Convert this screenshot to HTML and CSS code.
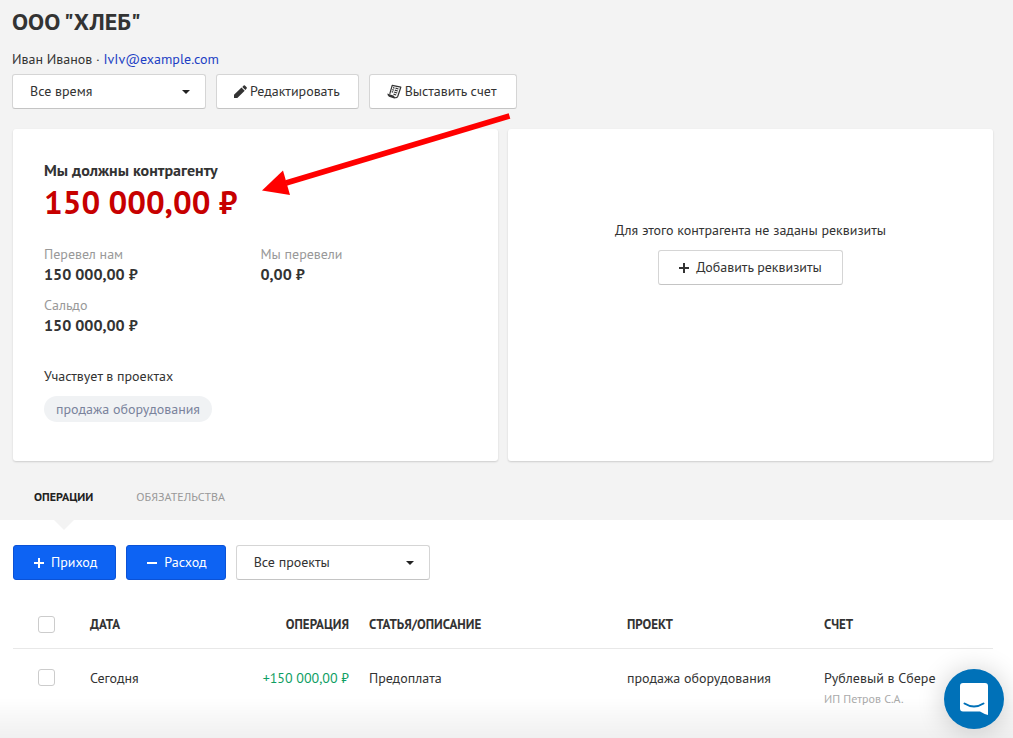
FILE: index.html
```html
<!DOCTYPE html>
<html lang="ru">
<head>
<meta charset="utf-8">
<meta name="viewport" content="width=device-width, initial-scale=1">
<title>ООО "ХЛЕБ"</title>
<link rel="stylesheet" href="styles.css">
</head>
<body>
<header class="summary">
  <h1 class="title">ООО "ХЛЕБ"</h1>
  <p class="contact">Иван Иванов · <a class="mail" href="mailto:IvIv@example.com">IvIv@example.com</a></p>
  <div class="toolbar">
    <div class="select-wrap">
      <select class="select" aria-label="Период"><option>Все время</option></select>
      <svg class="caret" viewBox="0 0 8 4" aria-hidden="true"><path d="M0 0h8L4 4z"/></svg>
    </div>
    <button class="btn" type="button">
      <svg class="icon icon-pencil" viewBox="0 0 13 13" aria-hidden="true"><path d="M0 13V9.800L7.500 2.600l3.200 3.200L3.300 13zM8.300 1.900L9.700.6q.6-.5 1.200 0l1.700 1.700q.6.600 0 1.200L11.400 4.900z"/></svg>
      Редактировать
    </button>
    <button class="btn btn-bill" type="button">
      <svg class="icon icon-bill" viewBox="0 0 15 15" aria-hidden="true"><path d="M2.800 9.800L5.200 1.400l8.600 1.800-3 9.100q-.7 1.800-2.500 1.200" fill="none" stroke="currentColor" stroke-width="1.200" stroke-linejoin="round"/><path d="M0.400 9.600l6.600 2.100q.2 1.700 2 2-.9 1.200-2.400.6L2 12.700Q.2 11.600.4 9.600z"/><path d="M6 3.700l1.500.4M8.500 4.200l3 .8M5.300 5.700l1.500.4M7.800 6.200l3 .8M4.700 7.700l1.500.4M7.200 8.200l3 .8M6.500 10.200l2.700.8" fill="none" stroke="currentColor" stroke-width="1.200"/></svg>
      Выставить счет
    </button>
  </div>
  <svg class="pointer" viewBox="0 0 250 84" aria-hidden="true"><path d="M247.500 4L24 71" stroke="#f00" stroke-width="5.500"/><path d="M0 78.500L21 58.500 28 83z" fill="#f00"/></svg>

  <div class="cards">
    <section class="card balance">
      <h2 class="debt-label">Мы должны контрагенту</h2>
      <p class="debt">150 000,00 ₽</p>
      <dl class="figures">
        <div><dt>Перевел нам</dt><dd>150 000,00 ₽</dd></div>
        <div><dt>Мы перевели</dt><dd>0,00 ₽</dd></div>
        <div><dt>Сальдо</dt><dd>150 000,00 ₽</dd></div>
      </dl>
      <p class="projects-label">Участвует в проектах</p>
      <span class="tag">продажа оборудования</span>
    </section>
    <section class="card requisites">
      <p>Для этого контрагента не заданы реквизиты</p>
      <button class="btn btn-add" type="button">
        <svg class="icon icon-sign" viewBox="0 0 10 10" aria-hidden="true"><path d="M4 0h2v4h4v2H6v4H4V6H0V4h4z"/></svg>
        Добавить реквизиты
      </button>
    </section>
  </div>

  <nav class="tabs">
    <a class="tab tab-active" href="#operations">ОПЕРАЦИИ</a>
    <a class="tab" href="#obligations">ОБЯЗАТЕЛЬСТВА</a>
  </nav>
</header>

<main class="operations" id="operations">
  <div class="toolbar">
    <button class="btn btn-primary" type="button">
      <svg class="icon icon-sign" viewBox="0 0 10 10" aria-hidden="true"><path d="M4 0h2v4h4v2H6v4H4V6H0V4h4z"/></svg>
      Приход
    </button>
    <button class="btn btn-primary" type="button">
      <svg class="icon icon-sign" viewBox="0 0 10 10" aria-hidden="true"><path d="M0 4h10v2H0z"/></svg>
      Расход
    </button>
    <div class="select-wrap">
      <select class="select" aria-label="Проект"><option>Все проекты</option></select>
      <svg class="caret" viewBox="0 0 8 4" aria-hidden="true"><path d="M0 0h8L4 4z"/></svg>
    </div>
  </div>
  <table class="table">
    <colgroup><col class="col-check"><col class="col-date"><col class="col-sum"><col class="col-article"><col class="col-project"><col class="col-account"></colgroup>
    <thead>
      <tr>
        <th class="check"><input class="box" type="checkbox" aria-label="Выбрать все"></th>
        <th>ДАТА</th><th class="sum">ОПЕРАЦИЯ</th><th>СТАТЬЯ/ОПИСАНИЕ</th><th>ПРОЕКТ</th><th>СЧЕТ</th>
      </tr>
    </thead>
    <tbody>
      <tr>
        <td class="check"><input class="box" type="checkbox" aria-label="Выбрать операцию"></td>
        <td>Сегодня</td><td class="sum income">+150 000,00 ₽</td><td>Предоплата</td><td>продажа оборудования</td>
        <td>Рублевый в Сбере<small class="owner">ИП Петров С.А.</small></td>
      </tr>
    </tbody>
  </table>
</main>

<div class="fade"></div>
<button class="chat" type="button" aria-label="Открыть чат">
  <svg class="chat-icon" viewBox="0 0 28 32" aria-hidden="true"><path d="M3 0h22q3 0 3 3v29q-4-1-8-3.500H3q-3 0-3-3V3q0-3 3-3z" fill="#fff"/><path d="M4.500 20.500q9.500 6 19 0" fill="none" stroke="#0071b8" stroke-width="2" stroke-linecap="round"/></svg>
</button>
</body>
</html>
```
FILE: styles.css
```css
* { box-sizing: border-box; }

body {
  margin: 0;
  min-height: 100vh;
  background: #fff;
  color: #333;
  font: 14px/20px "PT Sans", "Noto Sans", sans-serif;
}

h1, h2, p, dl, dd { margin: 0; }

.summary {
  position: relative;
  padding: 8px 20px 0 12px;
  background: #f3f3f3;
}

.title { font-size: 24px; line-height: 28px; }
.contact { margin-top: 13px; }
.mail { color: #1d3fc4; text-decoration: none; }

.toolbar { display: flex; gap: 10px; }
.summary .toolbar { margin-top: 5px; }

.btn,
.select {
  height: 35px;
  border: 1px solid #d5d5d5;
  border-bottom-color: #c4c4c4;
  border-radius: 3px;
  background: #fff;
  color: #333;
  font: inherit;
}

.btn {
  display: inline-flex;
  align-items: center;
  gap: 3px;
  padding: 0 18px 2px 17px;
  white-space: nowrap;
}

.btn-bill { padding-right: 20px; }
.btn-add { gap: 7px; padding: 0 20px 2px; }

.btn-primary {
  gap: 7px;
  padding: 0 18px 2px 20px;
  border-color: #0b52d6;
  background: #0d63f3;
  color: #fff;
}

.icon { flex: none; margin-top: 2px; fill: currentColor; }
.icon-pencil { width: 13px; height: 13px; }
.icon-bill { width: 15px; height: 15px; }
.icon-sign { width: 10px; height: 10px; }

.select-wrap { position: relative; width: 194px; }
.select { width: 100%; padding: 0 30px 2px 17px; appearance: none; }
.caret {
  position: absolute;
  top: 16px;
  right: 16px;
  width: 8px;
  height: 4px;
  fill: #222;
  pointer-events: none;
}

.pointer {
  position: absolute;
  top: 112px;
  left: 262px;
  width: 250px;
  height: 84px;
  pointer-events: none;
}

.cards {
  display: grid;
  grid-template-columns: 1fr 1fr;
  gap: 10px;
  margin: 20px 0 0 1px;
}

.card {
  min-height: 332px;
  border-radius: 3px;
  background: #fff;
  box-shadow: 0 1px 2px rgba(0, 0, 0, 0.16);
}

.balance { padding: 31px; }
.debt-label { font-size: 16px; line-height: 20px; }
.debt { color: #c70000; font-size: 33px; font-weight: 700; line-height: 44px; }

.figures {
  display: grid;
  grid-template-columns: 1fr 1fr;
  gap: 11px 10px;
  margin-top: 20px;
}

.figures dt { color: #999; }
.figures dd { font-size: 16px; font-weight: 700; }

.projects-label { margin-top: 31px; }

.tag {
  display: inline-block;
  margin-top: 10px;
  padding: 3px 12px;
  border-radius: 13px;
  background: #f0f2f4;
  color: #7a839c;
}

.requisites {
  display: flex;
  flex-direction: column;
  align-items: center;
  gap: 10px;
  padding-top: 91px;
}

.tabs {
  display: flex;
  gap: 43px;
  margin-top: 19px;
  padding-left: 22px;
}

.tab {
  position: relative;
  padding: 7px 0 13px;
  color: #999;
  font-size: 12px;
  text-decoration: none;
}

.tab-active { color: #222; font-weight: 700; }

.tab-active::after {
  content: "";
  position: absolute;
  top: 100%;
  left: calc(50% - 10px);
  border: 10px solid transparent;
  border-top-color: #f3f3f3;
  border-bottom-width: 0;
}

.operations { padding: 25px 20px 20px 13px; }

.table {
  width: 100%;
  margin-top: 20px;
  border-collapse: collapse;
  table-layout: fixed;
  text-align: left;
}

.table th { height: 48px; padding: 2px 10px 0; border-bottom: 1px solid #e8e8e8; font-size: 13px; }
.table td { padding: 19px 10px 0; vertical-align: top; white-space: nowrap; }
.table .check { padding-left: 25px; }
.table td.check { padding-top: 20px; }
.table .sum { text-align: right; }
.table .income { color: #0e9e63; }

.col-check { width: 67px; }
.col-date { width: 130px; }
.col-sum { width: 149px; }
.col-article { width: 258px; }
.col-project { width: 197px; }
.col-account { width: 179px; }

.box {
  display: block;
  width: 17px;
  height: 17px;
  margin: 0;
  border: 1px solid #ccc;
  border-radius: 3px;
  background: #fff;
  appearance: none;
}

.owner { display: block; margin-top: 1px; color: #aaa; font-size: 12px; }

.fade {
  position: fixed;
  inset: auto 0 0;
  height: 40px;
  background: linear-gradient(rgba(0, 0, 0, 0), rgba(0, 0, 0, 0.06));
  pointer-events: none;
}

.chat {
  position: fixed;
  right: 9px;
  bottom: 9px;
  display: grid;
  place-items: center;
  width: 60px;
  height: 60px;
  padding: 0;
  border: 0;
  border-radius: 50%;
  background: #0071b8;
  box-shadow: 0 2px 28px rgba(0, 0, 0, 0.2);
}

.chat-icon { width: 28px; height: 32px; }
```
